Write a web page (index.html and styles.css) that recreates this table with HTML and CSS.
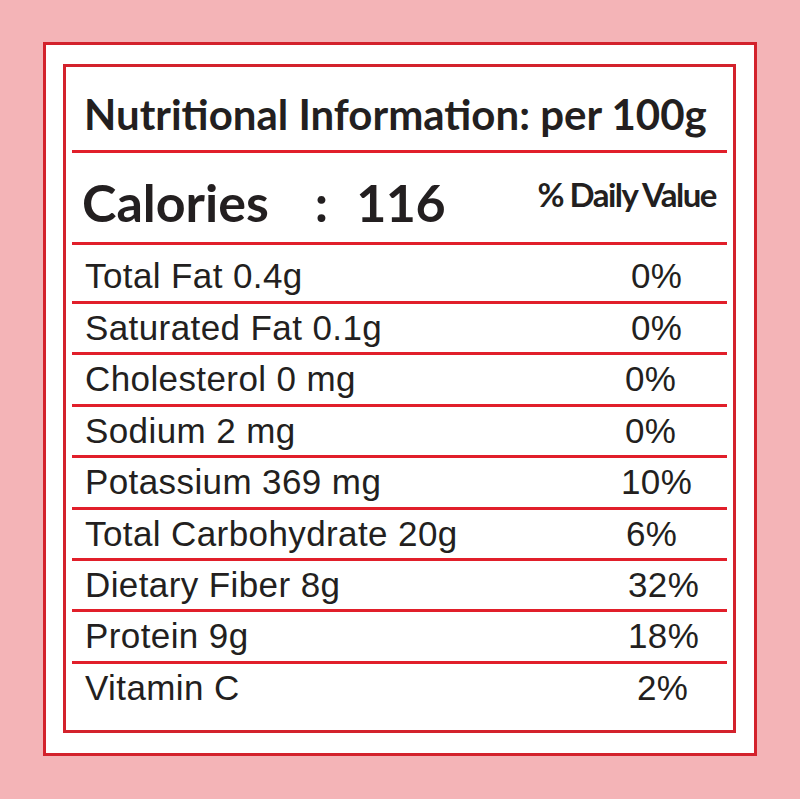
FILE: index.html
```html
<!DOCTYPE html>
<html lang="en">
<head>
<meta charset="utf-8">
<title>Nutritional Information</title>
<link rel="stylesheet" href="styles.css">
</head>
<body>
<div class="outer">
  <div class="label">
    <div class="title">Nutritional Information: per 100g</div>
    <div class="calories">
      <div class="cal-main"><span class="cal-label">Calories</span><span class="cal-colon">:</span><span class="cal-value">116</span></div>
      <div class="dv">% Daily Value</div>
    </div>
    <div class="rows">
      <div class="row"><span class="name">Total Fat 0.4g</span><span class="pct">0%</span></div>
      <div class="row"><span class="name">Saturated Fat 0.1g</span><span class="pct">0%</span></div>
      <div class="row"><span class="name">Cholesterol 0 mg</span><span class="pct">0%</span></div>
      <div class="row"><span class="name">Sodium 2 mg</span><span class="pct">0%</span></div>
      <div class="row"><span class="name">Potassium 369 mg</span><span class="pct">10%</span></div>
      <div class="row"><span class="name">Total Carbohydrate 20g</span><span class="pct">6%</span></div>
      <div class="row"><span class="name">Dietary Fiber 8g</span><span class="pct">32%</span></div>
      <div class="row"><span class="name">Protein 9g</span><span class="pct">18%</span></div>
      <div class="row"><span class="name">Vitamin C</span><span class="pct">2%</span></div>
    </div>
  </div>
</div>
</body>
</html>
```

FILE: styles.css
```css
* { box-sizing: border-box; }
html, body { margin: 0; padding: 0; }
body {
  background: #f4b4b7;
  padding: 42px 43px;
  width: 800px;
  height: 799px;
}
.outer {
  width: 714px;
  height: 714px;
  background: #ffffff;
  border: 3px solid #d3222c;
  padding: 19px 18px 20px 17px;
}
.label {
  width: 673px;
  height: 669px;
  border: 3px solid #d3222c;
  display: flex;
  flex-direction: column;
  padding: 0 6px 0 6px;
  color: #231f20;
}
.title {
  height: 86px;
  border-bottom: 3px solid #e11f2a;
  font-family: "Lato", "Open Sans", sans-serif;
  font-weight: 700;
  font-size: 42px;
  line-height: 1;
  padding: 26px 0 0 12px;
  white-space: nowrap;
}
.calories {
  height: 92px;
  border-bottom: 3px solid #e11f2a;
  display: flex;
  justify-content: space-between;
  font-family: "Lato", "Open Sans", sans-serif;
  font-weight: 700;
}
.cal-main {
  font-size: 52px;
  line-height: 1;
  padding: 23px 0 0 10px;
  white-space: nowrap;
}
.cal-colon { margin-left: 46px; }
.cal-value { margin-left: 28px; letter-spacing: -0.5px; }
.dv {
  font-size: 33px;
  letter-spacing: -1.5px;
  line-height: 1;
  padding: 25px 11px 0 0;
  white-space: nowrap;
}
.rows {
  flex: 1;
  display: flex;
  flex-direction: column;
  font-family: "Liberation Sans", Arial, sans-serif;
  font-size: 35px;
  letter-spacing: 0.4px;
}
.row {
  height: 51.4px;
  border-bottom: 3px solid #e11f2a;
  display: flex;
  line-height: 48.4px;
  padding-left: 13px;
  white-space: nowrap;
}
.row:first-child {
  height: 59px;
  padding-top: 7px;
}
.row:last-child {
  flex: 1;
  border-bottom: none;
}
.name { width: 534px; }
.row:nth-child(1) .pct,
.row:nth-child(2) .pct { margin-left: 12px; }
.row:nth-child(3) .pct { margin-left: 6px; }
.row:nth-child(4) .pct { margin-left: 6px; }
.row:nth-child(5) .pct { margin-left: 2px; }
.row:nth-child(6) .pct { margin-left: 7px; }
.row:nth-child(7) .pct { margin-left: 9px; }
.row:nth-child(8) .pct { margin-left: 9px; }
.row:nth-child(9) .pct { margin-left: 18px; }
```
